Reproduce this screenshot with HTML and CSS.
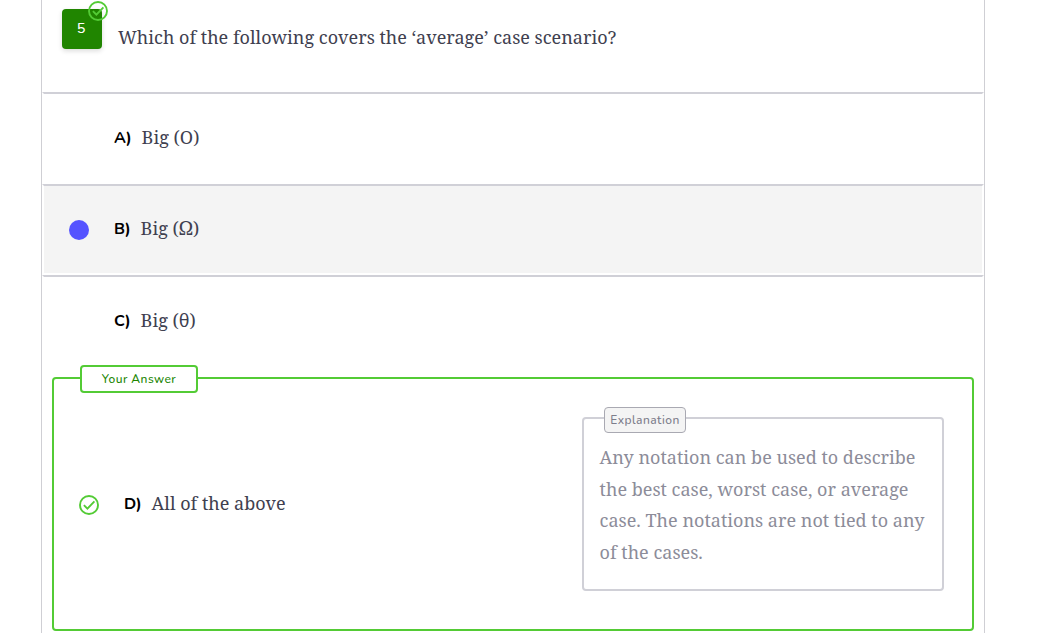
FILE: index.html
```html
<!DOCTYPE html>
<html lang="en">
<head>
<meta charset="utf-8">
<title>Quiz results</title>
<link rel="stylesheet" href="styles.css">
</head>
<body>
<main class="quiz">
  <header class="question">
    <div class="number">5
      <svg class="check number-check" viewBox="0 0 20 20"><circle cx="10" cy="10" r="9"/><path d="M4.9 10.1l3.5 3.5 7-7.2"/></svg>
    </div>
    <h1 class="question-text">Which of the following covers the ‘average’ case scenario?</h1>
  </header>
  <section class="option option-a">
    <span class="marker"></span><b class="letter">A)</b><span class="answer">Big (O)</span>
  </section>
  <section class="option option-b">
    <span class="marker"><i class="dot"></i></span><b class="letter">B)</b><span class="answer">Big (<span class="omega">Ω</span>)</span>
  </section>
  <section class="option option-c">
    <span class="marker"></span><b class="letter">C)</b><span class="answer">Big (θ)</span>
  </section>
  <section class="correct">
    <span class="tag">Your Answer</span>
    <span class="marker"><svg class="check" viewBox="0 0 20 20"><circle cx="10" cy="10" r="9"/><path d="M4.9 10.1l3.5 3.5 7-7.2"/></svg></span>
    <b class="letter">D)</b><span class="answer">All of the above</span>
    <aside class="explanation">
      <span class="explanation-tag">Explanation</span>
      <p>Any notation can be used to describe<br>the best case, worst case, or average<br>case. The notations are not tied to any<br>of the cases.</p>
    </aside>
  </section>
</main>
</body>
</html>
```
FILE: styles.css
```css
* { box-sizing: border-box; }
body { margin: 0; height: 633px; overflow: hidden; background: #fff; font-family: "Noto Serif", "Droid Serif", "DejaVu Serif Condensed", "DejaVu Serif", serif; font-size: 18px; letter-spacing: .01px; color: #40404f; }
.quiz { width: 944px; height: 633px; margin-left: 41px; border: solid #cfcfd4; border-width: 0 1px; }
.question { display: flex; height: 92px; padding: 9px 0 0 20px; }
.number { position: relative; width: 40px; height: 40px; border-radius: 4px; background: #208500; color: #fff; font: 500 14.5px/39px Nunito, Lato, sans-serif; text-align: center; padding-right: 2px; box-shadow: 0 2px 5px rgba(0,0,0,.14); }
.check { display: block; width: 20px; height: 20px; fill: none; stroke: #53cb35; stroke-width: 1.9; }
.number-check { position: absolute; right: -6px; top: -8px; }
.question-text { margin: 12px 0 0 16px; font-size: 18px; font-weight: 400; line-height: 32px; white-space: nowrap; }
.option { display: flex; align-items: center; height: 92px; border: 2px solid #fff; border-top-color: #d0d0d7; padding-left: 25px; }
.option-b { height: 91px; background: #f4f4f4; }
.marker { width: 20px; height: 20px; }
.dot { display: block; width: 20px; height: 20px; border-radius: 50%; background: #5553ff; }
.letter { width: 27.6px; margin-left: 25px; color: #000; font: 700 16px/24px Nunito, Lato, sans-serif; }
.option-b .letter, .option-c .letter { width: 26.6px; }
.answer { line-height: 32px; white-space: nowrap; }
.omega { font-size: 19px; line-height: 1; }
.option .answer { margin-bottom: 2px; }
.option-b .answer { margin-bottom: 3px; }
.option-b .letter { margin-bottom: 2px; }
.correct { position: relative; display: flex; align-items: center; width: 922px; height: 254px; margin: 10px 0 0 10px; border: 2px solid #53cb35; border-radius: 4px; padding: 0 28px 0 25px; }
.correct .marker { margin-top: 2px; }
.correct .answer { margin-bottom: 2px; }
.tag { position: absolute; left: 26px; top: -14px; width: 118px; height: 28px; border: 2px solid #53cb35; border-radius: 4px; background: #fff; color: #208500; font: 500 12px/25px Nunito, Lato, sans-serif; letter-spacing: .45px; text-align: center; }
.explanation { position: relative; width: 362px; height: 174px; margin-left: auto; border: 2px solid #d0d0d7; border-radius: 4px; padding: 23px 0 0 15.6px; color: #8c8c99; }
.explanation-tag { position: absolute; left: 20px; top: -12px; width: 82px; height: 26px; border: 1px solid #a9a9b2; border-radius: 4px; background: #f4f4f4; color: #7d7d8b; font: 500 12px/25px Nunito, "Open Sans", sans-serif; letter-spacing: .45px; text-align: center; }
.explanation p { margin: 0; line-height: 31.6px; white-space: nowrap; }
```
